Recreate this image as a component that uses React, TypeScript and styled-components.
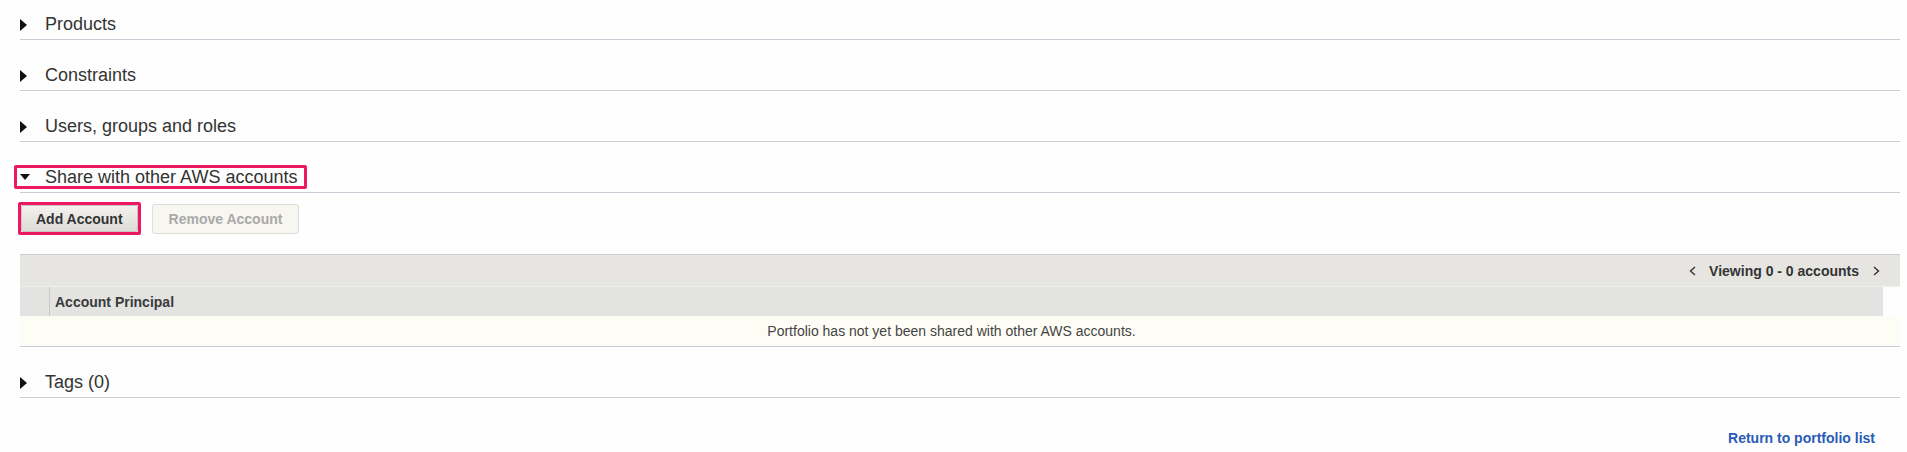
import React from "react";
import styled, { createGlobalStyle } from "styled-components";

const GlobalStyle = createGlobalStyle`
  html, body {
    margin: 0;
    padding: 0;
    background: #fdfefd;
  }
  body {
    font-family: "Liberation Sans", Arial, sans-serif;
    color: #333;
  }
`;

const Page = styled.div`
  padding: 0 7px 0 20px;
  width: 1907px;
  box-sizing: border-box;
`;

const Section = styled.section`
  & + & {
    margin-top: 11px;
  }
`;

const SectionHeader = styled.div`
  display: flex;
  align-items: center;
  padding-top: 10px;
  height: 29px;
  border-bottom: 1px solid #c9ccd6;
  font-size: 18px;
  color: #333;
  cursor: pointer;
`;

const CaretBox = styled.span`
  display: inline-flex;
  align-items: center;
  width: 25px;
  flex: none;
`;

const Caret = styled.span<{ $open?: boolean }>`
  display: block;
  width: 0;
  height: 0;
  ${({ $open }) =>
    $open
      ? `border-top: 6px solid #111;
         border-left: 5px solid transparent;
         border-right: 5px solid transparent;`
      : `border-left: 7px solid #111;
         border-top: 6px solid transparent;
         border-bottom: 6px solid transparent;`}
`;

const Highlight = styled.span`
  display: inline-flex;
  align-items: center;
  border: 3px solid #ee1762;
  border-radius: 2px;
  line-height: 18px;
`;

const TitleHighlight = styled(Highlight)`
  margin-left: -6px;
  padding: 0 7px 0 3px;
  margin-bottom: 2px;
`;

const Body = styled.div``;

const ButtonRow = styled.div`
  display: flex;
  align-items: center;
  gap: 11px;
  margin-top: 9px;
  height: 33px;
`;

const ButtonHighlight = styled(Highlight)`
  margin-left: -2px;
`;

const Button = styled.button<{ $disabled?: boolean }>`
  font-family: "Liberation Sans", Arial, sans-serif;
  font-weight: bold;
  font-size: 14px;
  padding: 0 14px;
  border-radius: 2px;
  cursor: pointer;
  ${({ $disabled }) =>
    $disabled
      ? `height: 30px;
         padding: 0 16px;
         border-radius: 3px;
         color: #a9a9a9;
         background: #f8f6f0;
         border: 1px solid #e0ddd6;
         cursor: default;`
      : `height: 27px;
         color: #333;
         background: linear-gradient(#f3f2ef, #dcdbd7);
         border: 1px solid #c6c5c1;`}
`;

const Table = styled.div`
  margin-top: 19px;
  border-top: 1px solid #c8ccd4;
  border-bottom: 1px solid #c8ccd4;
`;

const Toolbar = styled.div`
  display: flex;
  justify-content: flex-end;
  align-items: center;
  height: 31px;
  padding-right: 20px;
  background: #e6e5e2;
  border-bottom: 1px solid #efefef;
  font-size: 14px;
  font-weight: bold;
  color: #333;
`;

const Pager = styled.span`
  display: inline-flex;
  align-items: center;
`;

const PagerText = styled.span`
  margin: 0 14px 0 13px;
`;

const HeaderRow = styled.div`
  display: flex;
  height: 29px;
  margin-right: 17px;
  background: #e3e3e2;
`;

const CheckCell = styled.div`
  width: 29px;
  border-right: 1px solid #c9c9c9;
  flex: none;
`;

const HeaderCell = styled.div`
  display: flex;
  align-items: center;
  padding-left: 5px;
  font-size: 14px;
  font-weight: bold;
  color: #3a3a3a;
`;

const EmptyRow = styled.div`
  display: flex;
  align-items: center;
  justify-content: center;
  height: 30px;
  padding-right: 17px;
  background: #fdfdf6;
  font-size: 14px;
  color: #444;
`;

const Footer = styled.div`
  display: flex;
  justify-content: flex-end;
  padding: 31px 25px 0 0;
  line-height: 18px;
`;

const Link = styled.a`
  font-size: 14px;
  font-weight: bold;
  color: #2a5bb7;
  text-decoration: none;
  cursor: pointer;
`;

const Chevron = ({ dir }: { dir: "left" | "right" }) => (
  <svg width="7" height="10" viewBox="0 0 7 10">
    <polyline
      points={dir === "left" ? "6,1 1.5,5 6,9" : "1,1 5.5,5 1,9"}
      fill="none"
      stroke="#333"
      strokeWidth="1.4"
    />
  </svg>
);

const Collapsed = ({ title }: { title: string }) => (
  <Section>
    <SectionHeader>
      <CaretBox>
        <Caret />
      </CaretBox>
      {title}
    </SectionHeader>
  </Section>
);

export default function App() {
  return (
    <>
      <GlobalStyle />
      <Page>
        <Collapsed title="Products" />
        <Collapsed title="Constraints" />
        <Collapsed title="Users, groups and roles" />
        <Section>
          <SectionHeader>
            <TitleHighlight>
              <CaretBox>
                <Caret $open />
              </CaretBox>
              Share with other AWS accounts
            </TitleHighlight>
          </SectionHeader>
          <Body>
            <ButtonRow>
              <ButtonHighlight>
                <Button>Add Account</Button>
              </ButtonHighlight>
              <Button $disabled>Remove Account</Button>
            </ButtonRow>
            <Table>
              <Toolbar>
                <Pager>
                  <Chevron dir="left" />
                  <PagerText>Viewing 0 - 0 accounts</PagerText>
                  <Chevron dir="right" />
                </Pager>
              </Toolbar>
              <HeaderRow>
                <CheckCell />
                <HeaderCell>Account Principal</HeaderCell>
              </HeaderRow>
              <EmptyRow>Portfolio has not yet been shared with other AWS accounts.</EmptyRow>
            </Table>
          </Body>
        </Section>
        <Collapsed title="Tags (0)" />
        <Footer>
          <Link>Return to portfolio list</Link>
        </Footer>
      </Page>
    </>
  );
}
